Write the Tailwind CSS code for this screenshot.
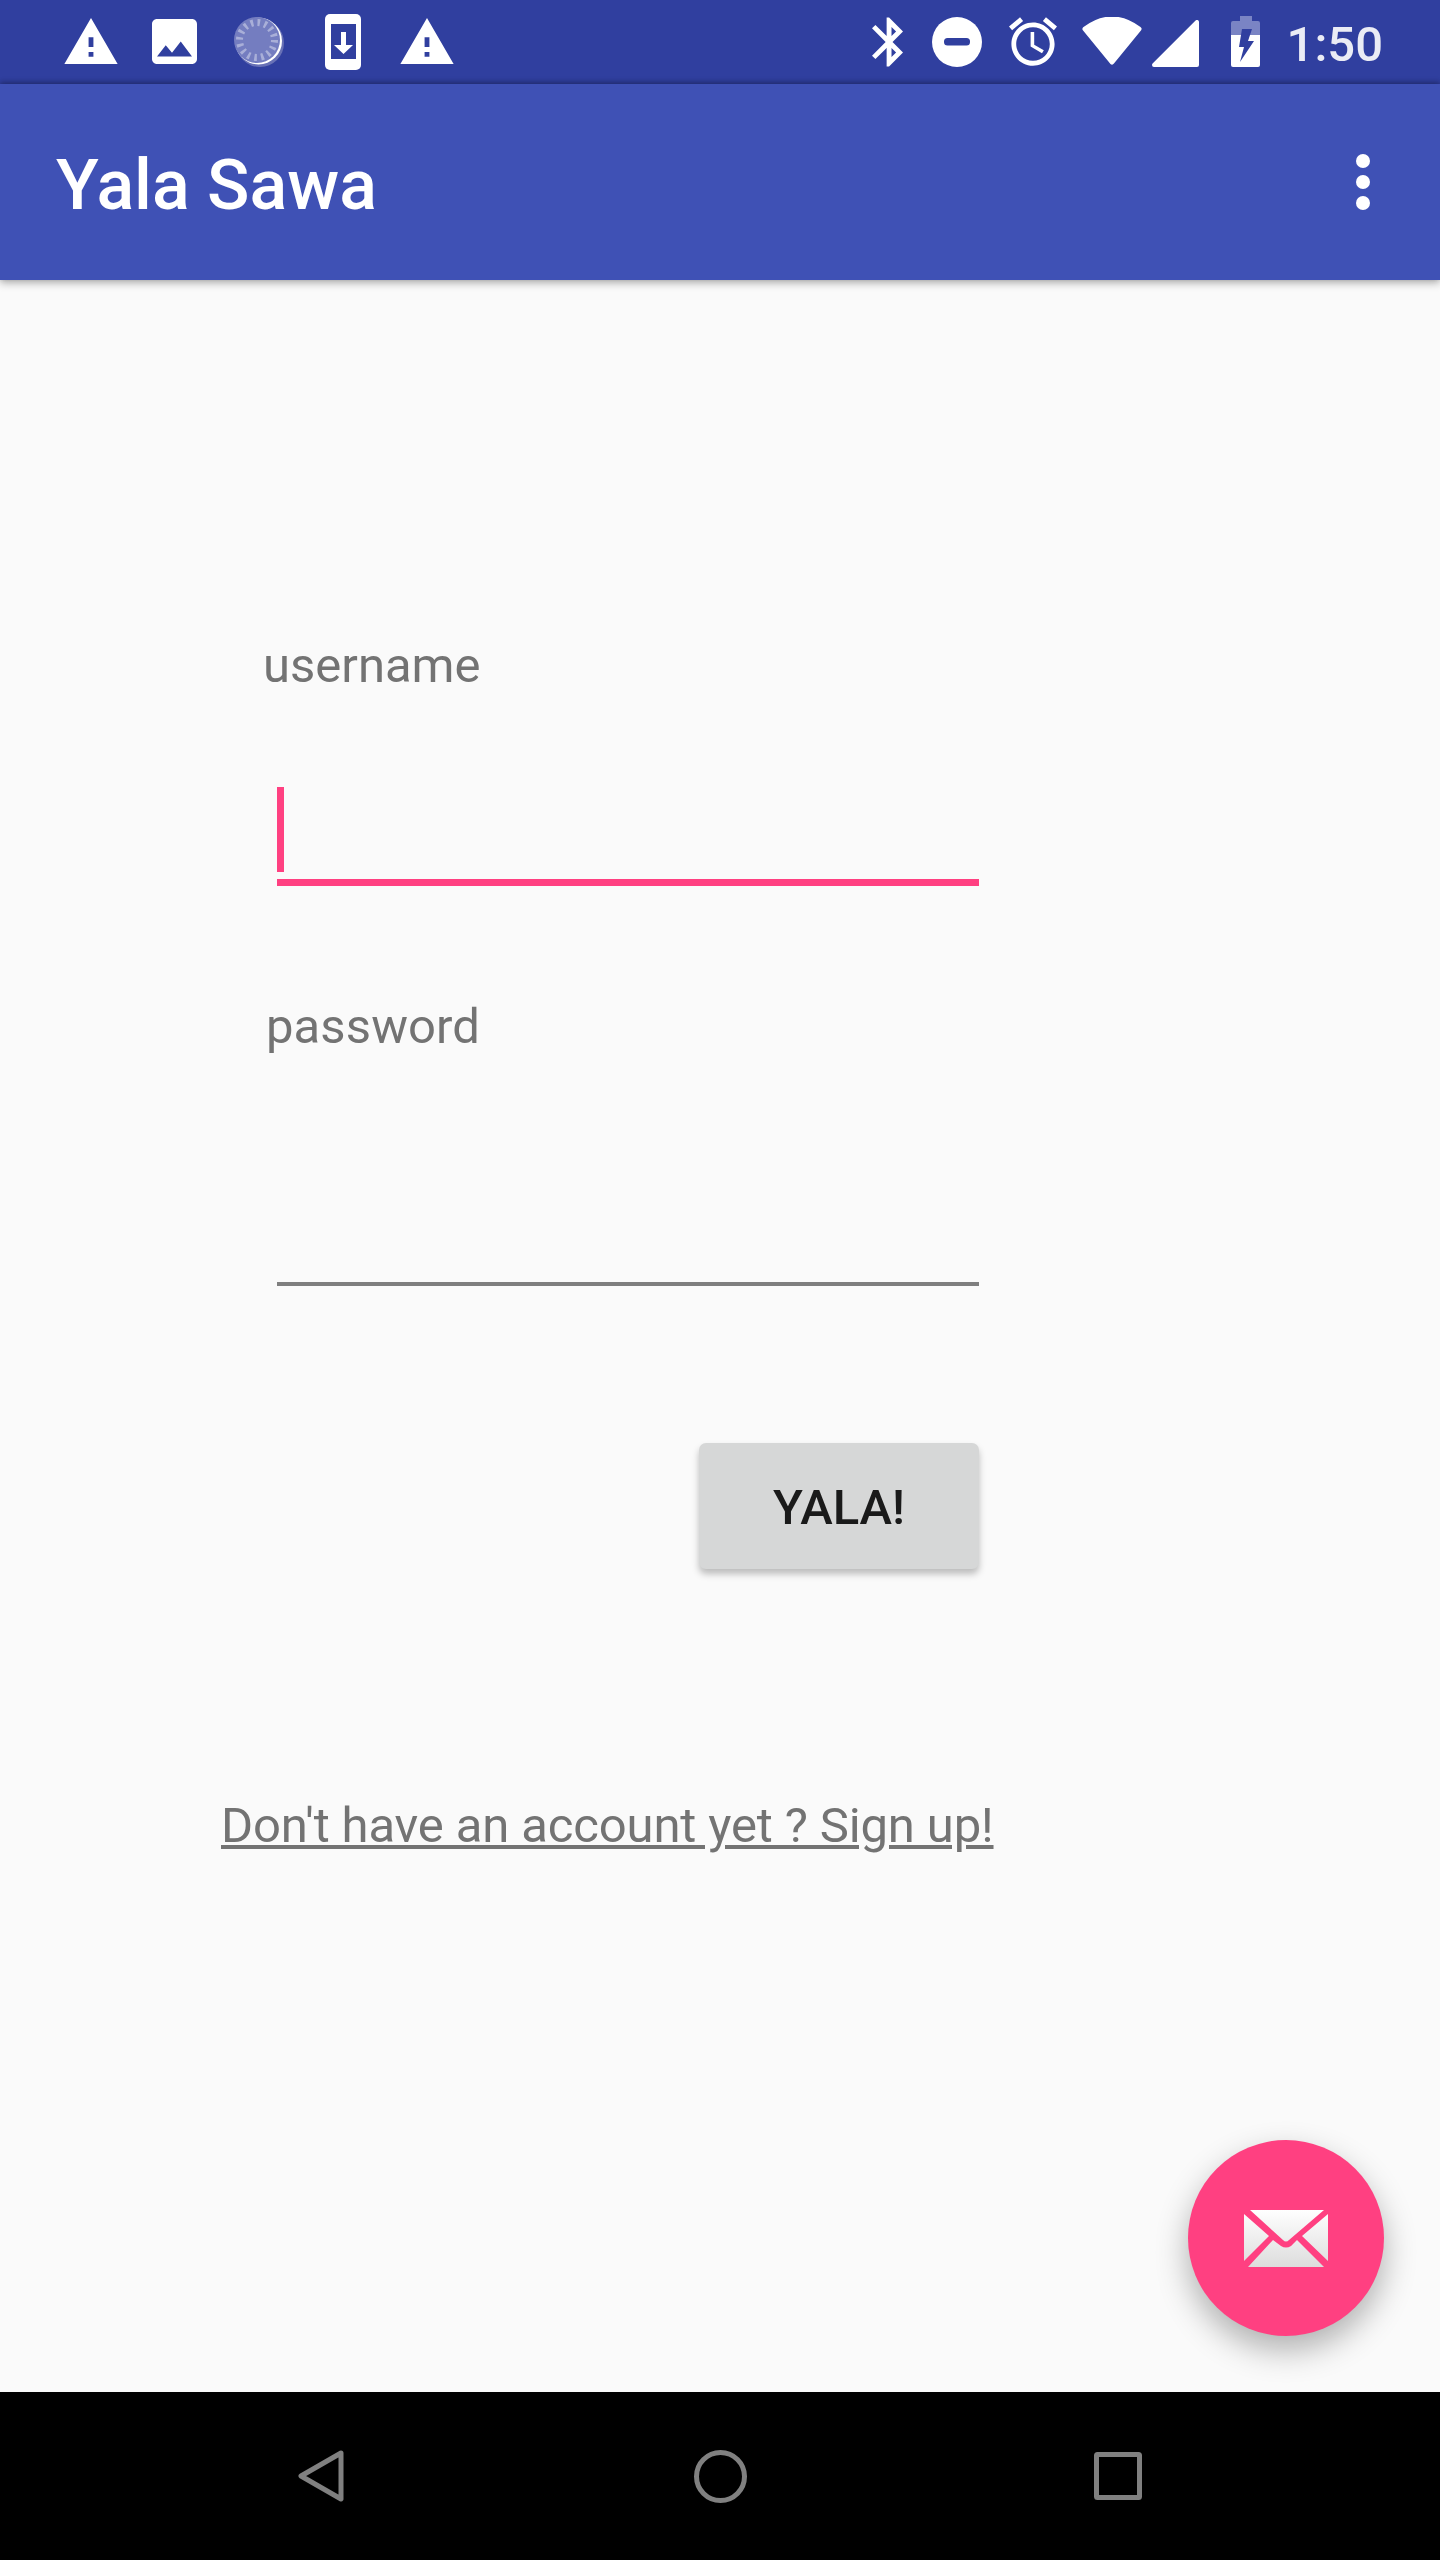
<!DOCTYPE html>
<html lang="en">
<head>
  <meta charset="UTF-8">
  <title>Yala Sawa</title>
  <script src="https://cdn.jsdelivr.net/npm/@tailwindcss/browser@4"></script>
</head>
<body class="bg-[#fafafa] font-[Roboto,sans-serif]">
  <div class="relative w-[1440px] h-[2560px] flex flex-col overflow-hidden">

    <!-- status bar -->
    <div class="h-[84px] bg-[#303f9f] flex justify-between items-start pl-[64px] pr-[57px] shrink-0">
      <div class="flex items-start">
        <svg class="mt-[18px] w-[54px] h-[46px]" viewBox="1 2 22 19" fill="#fff"><path d="M1 21h22L12 2 1 21zm12-3h-2v-2h2v2zm0-4h-2v-4h2v4z"/></svg>
        <svg class="mt-[19px] ml-[34px] w-[45px] h-[45px]" viewBox="3 3 18 18" fill="#fff"><path d="M21 19V5c0-1.1-.9-2-2-2H5c-1.1 0-2 .9-2 2v14c0 1.1.9 2 2 2h14c1.1 0 2-.9 2-2zM8.5 13.5l2.5 3.01L14.5 12l4.5 6H5l3.5-4.5z"/></svg>
        <svg class="mt-[15px] ml-[35px] w-[54px] h-[54px]" viewBox="232 15 54 54">
          <circle cx="260" cy="43" r="24" fill="#6871b6"/>
          <circle cx="258.5" cy="41" r="23.5" fill="#fff"/>
          <circle cx="257" cy="40" r="23" fill="#747dc0"/>
          <circle cx="257" cy="40" r="17.5" fill="none" stroke="#a9afd8" stroke-width="7" stroke-dasharray="2.6 4.27"/>
        </svg>
        <svg class="mt-[14px] ml-[39px] w-[36px] h-[56px]" viewBox="325 14 36 56">
          <rect x="325" y="14" width="36" height="56" rx="5" fill="#fff"/>
          <rect x="331" y="24" width="25" height="35" fill="#303f9f"/>
          <path d="M341 32h5v13h7l-9.5 9-9.5-9h7z" fill="#fff"/>
        </svg>
        <svg class="mt-[18px] ml-[39px] w-[54px] h-[46px]" viewBox="1 2 22 19" fill="#fff"><path d="M1 21h22L12 2 1 21zm12-3h-2v-2h2v2zm0-4h-2v-4h2v4z"/></svg>
      </div>
      <div class="flex items-start">
        <svg class="mt-[17px] w-[31px] h-[50px]" viewBox="5 2 12.71 20" fill="#fff"><path d="M17.71 7.71L12 2h-1v7.59L6.41 5 5 6.41 10.59 12 5 17.59 6.41 19 11 14.41V22h1l5.71-5.71-4.3-4.29 4.3-4.29zM13 5.83l1.88 1.88L13 9.59V5.83zm1.88 10.46L13 18.17v-3.76l1.88 1.88z"/></svg>
        <svg class="mt-[17px] ml-[29px] w-[50px] h-[50px]" viewBox="0 0 50 50">
          <circle cx="25" cy="25" r="25" fill="#fff"/>
          <rect x="12" y="21" width="26" height="7.5" rx="3.5" fill="#303f9f"/>
        </svg>
        <svg class="mt-[17px] ml-[27px] w-[48px] h-[49px]" viewBox="2 1.86 20 20.14" fill="#fff"><path d="M22 5.72l-4.6-3.86-1.29 1.53 4.6 3.86L22 5.72zM7.88 3.39L6.6 1.86 2 5.71l1.29 1.53 4.59-3.85zM12.5 8H11v6l4.75 2.85.75-1.23-4-2.37V8zM12 4c-4.97 0-9 4.03-9 9s4.03 9 9 9 9-4.03 9-9-4.03-9-9-9zm0 16c-3.87 0-7-3.13-7-7s3.13-7 7-7 7 3.13 7 7-3.13 7-7 7z"/></svg>
        <svg class="mt-[17px] ml-[25px] w-[60px] h-[48px]" viewBox="1082 17 60 48">
          <path d="M1085 29Q1112 9 1139 29L1112 62Z" fill="#fff" stroke="#fff" stroke-width="5" stroke-linejoin="round"/>
        </svg>
        <svg class="mt-[20px] ml-[10px] w-[47px] h-[47px]" viewBox="1152 20 47 47">
          <path d="M1154 65L1197 22V65Z" fill="#fff" stroke="#fff" stroke-width="4" stroke-linejoin="round"/>
        </svg>
        <svg class="mt-[16px] ml-[32px] w-[29px] h-[51px]" viewBox="1231 16 29 51">
          <path d="M1240 16h12v5h6q2 0 2 2v12h-29V23q0-2 2-2h7z" fill="#7a84c4"/>
          <path d="M1231 35h29v30q0 2-2 2h-25q-2 0-2-2z" fill="#fff"/>
          <path d="M1242 29h10l-4 12h6l-14 21 4-15h-5z" fill="#303f9f"/>
        </svg>
        <span class="mt-[17px] ml-[27px] text-[49px] leading-[56px] font-medium text-white/90">1:50</span>
      </div>
    </div>

    <!-- app bar -->
    <div class="relative h-[196px] bg-[#3f51b5] flex items-center justify-between pl-[56px] pr-[70px] shrink-0 shadow-[0_3px_8px_rgba(0,0,0,0.3),0_-2px_5px_rgba(0,0,0,0.25)]">
      <span class="mt-[6px] text-[70px] leading-[82px] font-medium text-white">Yala Sawa</span>
      <div class="flex flex-col gap-[7px]">
        <div class="w-[14px] h-[14px] rounded-full bg-white"></div>
        <div class="w-[14px] h-[14px] rounded-full bg-white"></div>
        <div class="w-[14px] h-[14px] rounded-full bg-white"></div>
      </div>
    </div>

    <!-- login form -->
    <div class="flex-1 flex flex-col items-start text-[49px] leading-[56px] text-[#737373]">
      <div class="mt-[358px] ml-[263px]">username</div>
      <div class="mt-[93px] ml-[277px] w-[702px] border-b-[7px] border-[#ff4081] pb-[7px]">
        <div class="w-[7px] h-[85px] bg-[#ff4081]"></div>
      </div>
      <div class="mt-[113px] ml-[266px] tracking-[0.1px]">password</div>
      <div class="ml-[277px] w-[702px] h-[231px] border-b-[4px] border-[#7f7f7f]"></div>
      <button class="mt-[157px] ml-[699px] w-[280px] h-[126px] pt-[3px] rounded-[7px] bg-[#d6d7d7] text-[#1a1a1a] font-medium shadow-[0_5px_7px_rgba(0,0,0,0.25)]">YALA!</button>
      <a href="#" class="mt-[229px] ml-[221px] underline tracking-[-0.14px]">Don't have an account yet ? Sign up!</a>
    </div>

    <!-- nav bar -->
    <div class="h-[168px] bg-black flex items-center pl-[298px] shrink-0">
      <svg class="w-[46px] h-[52px]" viewBox="298 2450 46 52" fill="none" stroke="#808080" stroke-width="5" stroke-linejoin="round"><path d="M341 2453L301 2476L341 2499Z"/></svg>
      <svg class="ml-[350px] w-[53px] h-[53px]" viewBox="0 0 53 53" fill="none" stroke="#808080" stroke-width="5"><circle cx="26.5" cy="26.5" r="24"/></svg>
      <svg class="ml-[347px] w-[48px] h-[48px]" viewBox="0 0 48 48" fill="none" stroke="#808080" stroke-width="5" stroke-linejoin="round"><rect x="2.5" y="2.5" width="43" height="43" rx="1"/></svg>
    </div>

    <!-- mail fab -->
    <button class="absolute left-[1188px] top-[2140px] w-[196px] h-[196px] rounded-full bg-[#ff4081] flex items-center justify-center shadow-[0_14px_32px_rgba(0,0,0,0.3)]">
      <svg class="w-[84px] h-[57px]" viewBox="1244 2210 84 57">
        <defs>
          <linearGradient id="mail" gradientUnits="userSpaceOnUse" x1="0" y1="2210" x2="0" y2="2267">
            <stop offset="0" stop-color="#ffffff"/>
            <stop offset="1" stop-color="#dddddd"/>
          </linearGradient>
        </defs>
        <path fill="url(#mail)" d="M1250 2210H1324L1289 2240Q1286 2243 1283 2240ZM1244 2214L1269 2236L1244 2261ZM1328 2214V2261L1302 2236ZM1248 2267L1273 2240L1281 2246Q1286 2249 1291 2246L1297 2240L1324 2267Z"/>
      </svg>
    </button>
  </div>
</body>
</html>
